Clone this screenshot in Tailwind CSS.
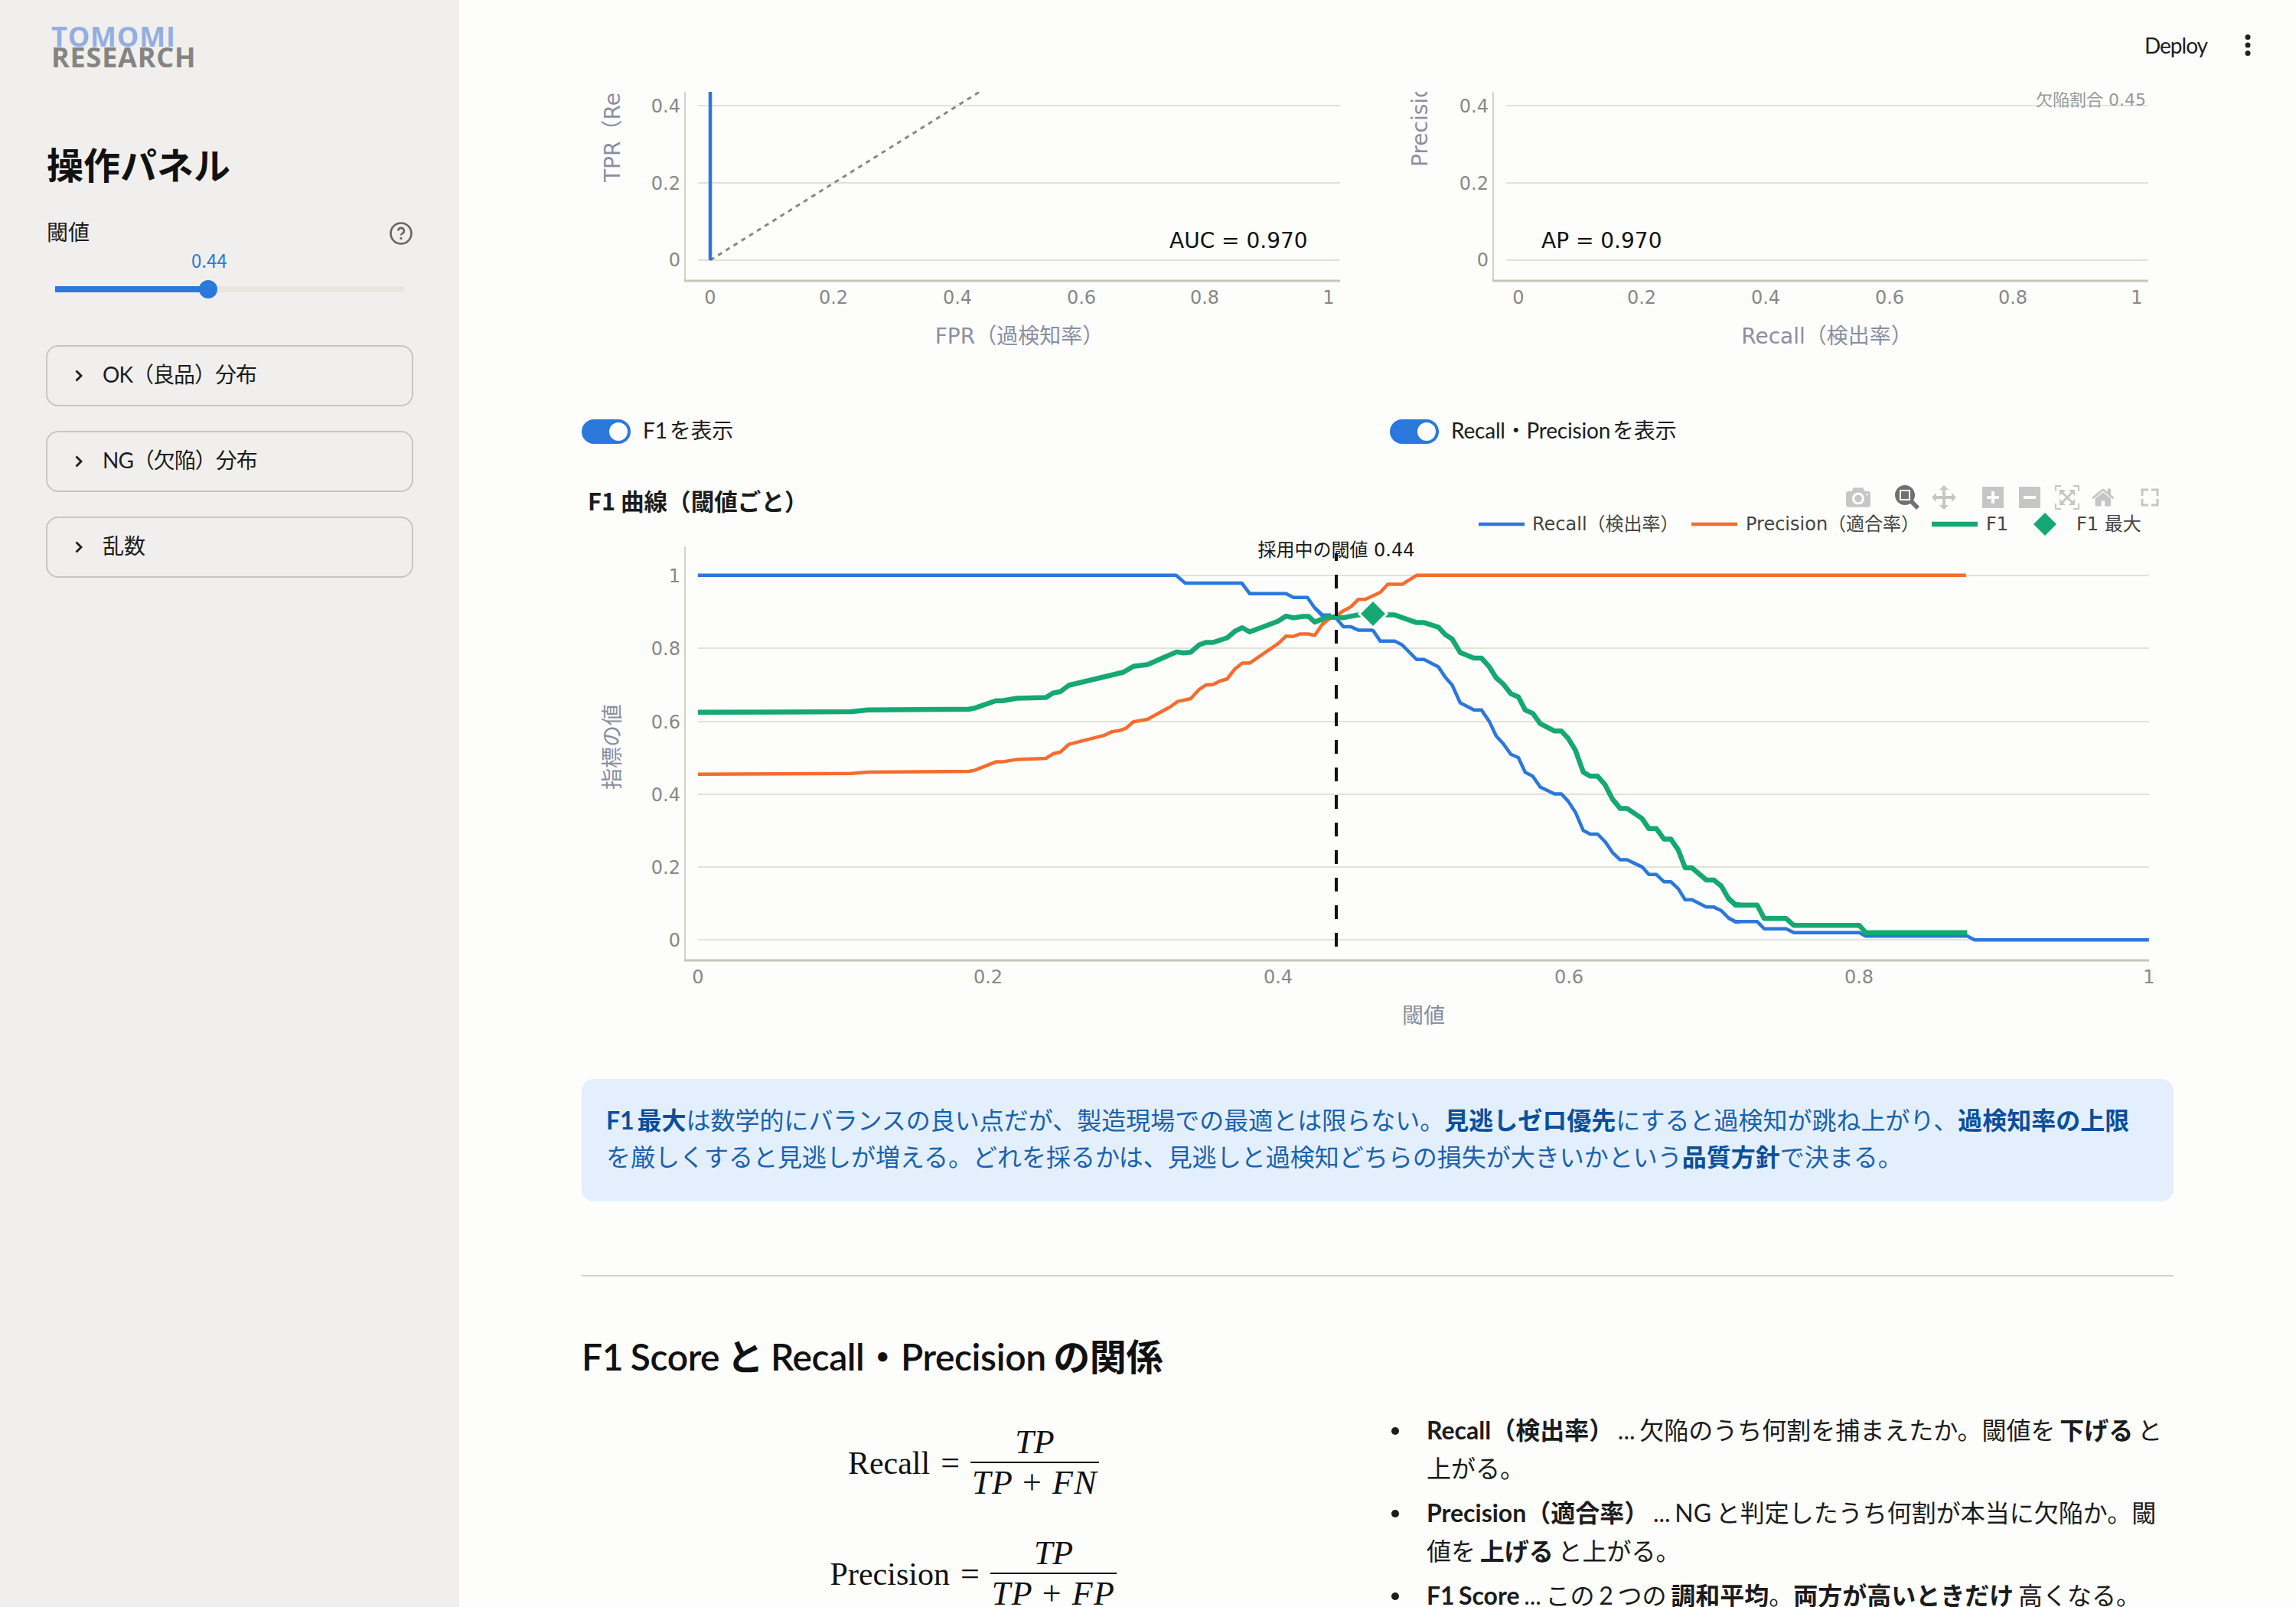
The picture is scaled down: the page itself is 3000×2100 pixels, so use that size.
<!DOCTYPE html>
<html lang="ja">
<head>
<meta charset="utf-8">
<script src="https://cdn.jsdelivr.net/npm/@tailwindcss/browser@4"></script>
</head>
<body class="m-0 bg-[#fdfdfc]">
<div class="flex w-[3000px] h-[2100px] overflow-hidden bg-[#fdfdfc] text-[#1c1c1c] [font-family:'Lato','Noto_Sans_CJK_JP',sans-serif]">

  <aside class="w-[600px] shrink-0 h-full bg-[#f0efed] pt-[35px] pl-[60px] pr-[60px]">
    <div class="pl-[7px] [font-family:'Open_Sans',sans-serif] font-bold text-[36px] leading-[26.5px] tracking-[0.8px]">
      <div class="text-[#94aee0]">TOMOMI</div>
      <div class="text-[#848484]">RESEARCH</div>
    </div>
    <h2 class="mt-[96px] text-[48px] leading-[64px] font-bold text-[#111] pl-px">操作パネル</h2>
    <div class="mt-[35px] flex items-center justify-between h-[40px] pl-px">
      <span class="text-[28px] leading-[40px]">閾値</span>
      <svg width="32" height="32" viewBox="0 0 32 32" fill="none" class="mr-0 mt-[3px]"><circle cx="16" cy="16" r="13.5" stroke="#666" stroke-width="2.6"/><path d="M12.3 12.6a3.8 3.8 0 1 1 5.6 3.4c-1.2.7-1.9 1.3-1.9 2.6" stroke="#666" stroke-width="2.6"/><circle cx="16" cy="22.4" r="1.6" fill="#666"/></svg>
    </div>
    <div class="relative h-[60px] mt-[-1px] mx-[12px]">
      <span class="absolute left-[178px] top-0 w-[46px] text-center text-[24px] leading-[36px] text-[#2d78d8] [font-family:'Noto_Sans_CJK_JP',sans-serif]">0.44</span>
      <div class="absolute left-0 right-0 top-[52px] h-[8px] bg-[#e8e7df]"></div>
      <div class="absolute left-0 w-[200px] top-[52px] h-[8px] bg-[#2b78dc]"></div>
      <div class="absolute left-[188px] top-[44px] w-[24px] h-[24px] rounded-full bg-[#2b78dc]"></div>
    </div>
    <div class="mt-[69px] flex flex-col gap-[32px]">
      <div class="h-[80px] rounded-[16px] border-2 border-[#c6c6c3] flex items-center pl-[36px] gap-[26px] text-[28px] tracking-[-1px]">
        <svg width="10" height="16" viewBox="0 0 10 16" fill="none"><path d="M1.5 1.5 8 8l-6.500 6.500" stroke="#1c1c1c" stroke-width="2.800"/></svg><span class="pb-[4px]">OK（良品）分布</span>
      </div>
      <div class="h-[80px] rounded-[16px] border-2 border-[#c6c6c3] flex items-center pl-[36px] gap-[26px] text-[28px] tracking-[-1px]">
        <svg width="10" height="16" viewBox="0 0 10 16" fill="none"><path d="M1.5 1.5 8 8l-6.500 6.500" stroke="#1c1c1c" stroke-width="2.800"/></svg><span class="pb-[4px]">NG（欠陥）分布</span>
      </div>
      <div class="h-[80px] rounded-[16px] border-2 border-[#c6c6c3] flex items-center pl-[36px] gap-[26px] text-[28px]">
        <svg width="10" height="16" viewBox="0 0 10 16" fill="none"><path d="M1.5 1.5 8 8l-6.500 6.500" stroke="#1c1c1c" stroke-width="2.800"/></svg><span class="pb-[4px]">乱数</span>
      </div>
    </div>
  </aside>

  <main class="flex-1 min-w-0 h-full flex flex-col">
    <header class="h-[120px] shrink-0 flex items-center justify-end pr-[60px] gap-[46px] pb-[3px]">
      <span class="text-[28px] leading-[40px] tracking-[-1px]">Deploy</span>
      <svg width="10" height="30" viewBox="0 0 10 30" class="relative left-[2px]"><circle cx="5" cy="4.500" r="3.500" fill="#222"/><circle cx="5" cy="15" r="3.500" fill="#222"/><circle cx="5" cy="25.500" r="3.500" fill="#222"/></svg>
    </header>

    <div class="px-[160px] flex-1 min-h-0 overflow-hidden">
      <div class="grid grid-cols-2 gap-[32px]">
        <svg width="1024" height="380" viewBox="760 120 1024 380" class="block [font-family:'DejaVu_Sans','Noto_Sans_CJK_JP',sans-serif]">
          <g stroke="#e2e2d9" stroke-width="2"><line x1="912" x2="1751" y1="138" y2="138"/><line x1="912" x2="1751" y1="239" y2="239"/><line x1="912" x2="1751" y1="340" y2="340"/></g>
          <line x1="895" x2="895" y1="120" y2="367" stroke="#d3d3c8" stroke-width="2"/>
          <line x1="894" x2="1751" y1="367" y2="367" stroke="#c6c6b6" stroke-width="3"/>
          <line x1="928" x2="1280" y1="340" y2="120" stroke="#888" stroke-width="3" stroke-dasharray="6 6"/>
          <line x1="928" x2="928" y1="120" y2="340" stroke="#2b78dc" stroke-width="4.500"/>
          <g font-size="24" fill="#888" text-anchor="end" dominant-baseline="central"><text x="889" y="139">0.4</text><text x="889" y="240">0.2</text><text x="889" y="340">0</text></g>
          <g font-size="24" fill="#888" text-anchor="middle" dominant-baseline="central"><text x="928" y="389">0</text><text x="1089" y="389">0.2</text><text x="1251" y="389">0.4</text><text x="1413" y="389">0.6</text><text x="1574" y="389">0.8</text><text x="1736" y="389">1</text></g>
          <text x="1528" y="314" font-size="28" fill="#111" dominant-baseline="central">AUC = 0.970</text>
          <text x="1332" y="439" font-size="28" fill="#8b8fa0" text-anchor="middle" dominant-baseline="central">FPR（過検知率）</text>
          <text x="800" y="238" font-size="28" fill="#8b8fa0" dominant-baseline="central" transform="rotate(-90 800 238)">TPR（Recall）</text>
        </svg>
        <svg width="1024" height="380" viewBox="1816 120 1024 380" class="block [font-family:'DejaVu_Sans','Noto_Sans_CJK_JP',sans-serif]">
          <g stroke="#e2e2d9" stroke-width="2"><line x1="1968" x2="2807" y1="138" y2="138"/><line x1="1968" x2="2807" y1="239" y2="239"/><line x1="1968" x2="2807" y1="340" y2="340"/></g>
          <line x1="1951" x2="1951" y1="120" y2="367" stroke="#d3d3c8" stroke-width="2"/>
          <line x1="1950" x2="2807" y1="367" y2="367" stroke="#c6c6b6" stroke-width="3"/>
          <g font-size="24" fill="#888" text-anchor="end" dominant-baseline="central"><text x="1945" y="139">0.4</text><text x="1945" y="240">0.2</text><text x="1945" y="340">0</text></g>
          <g font-size="24" fill="#888" text-anchor="middle" dominant-baseline="central"><text x="1984" y="389">0</text><text x="2145" y="389">0.2</text><text x="2307" y="389">0.4</text><text x="2469" y="389">0.6</text><text x="2630" y="389">0.8</text><text x="2792" y="389">1</text></g>
          <text x="2804" y="130" font-size="22" fill="#999" text-anchor="end" dominant-baseline="central">欠陥割合 0.45</text>
          <text x="2014" y="314" font-size="28" fill="#111" dominant-baseline="central">AP = 0.970</text>
          <text x="2387" y="439" font-size="28" fill="#8b8fa0" text-anchor="middle" dominant-baseline="central">Recall（検出率）</text>
          <text x="1855" y="218" font-size="28" fill="#8b8fa0" dominant-baseline="central" transform="rotate(-90 1855 218)">Precision（適合率）</text>
        </svg>
      </div>

      <div class="grid grid-cols-2 gap-[32px] mt-[46px] h-[32px] text-[28px] leading-[32px] tracking-[-0.2px] [word-spacing:-4px]">
        <label class="flex items-center gap-[16px]">
          <span class="relative block w-[64px] h-[32px] rounded-full bg-[#2b78dc]"><span class="absolute right-[4px] top-[4px] w-[24px] h-[24px] rounded-full bg-white"></span></span>
          <span class="pb-[3px]">F1 を表示</span>
        </label>
        <label class="flex items-center gap-[16px]">
          <span class="relative block w-[64px] h-[32px] rounded-full bg-[#2b78dc]"><span class="absolute right-[4px] top-[4px] w-[24px] h-[24px] rounded-full bg-white"></span></span>
          <span class="pb-[3px]">Recall・Precision を表示</span>
        </label>
      </div>

      <svg width="2080" height="730" viewBox="760 620 2080 730" class="block mt-[42px] [font-family:'DejaVu_Sans','Noto_Sans_CJK_JP',sans-serif]">
        <text x="768" y="654" font-size="30.600" font-weight="700" fill="#1c1c1c" dominant-baseline="central" class="[font-family:'Noto_Sans_CJK_JP',sans-serif]">F1 曲線（閾値ごと）</text>

        <g fill="#c6c6c6">
          <path transform="translate(2412 661.200) scale(.032 -.032)" d="m500 450c-83 0-150-67-150-150 0-83 67-150 150-150 83 0 150 67 150 150 0 83-67 150-150 150z m400 150h-120c-16 0-34 13-39 29l-31 93c-6 15-23 28-40 28h-340c-16 0-34-13-39-28l-31-94c-6-15-23-28-40-28h-120c-55 0-100-45-100-100v-450c0-55 45-100 100-100h800c55 0 100 45 100 100v450c0 55-45 100-100 100z m-400-550c-138 0-250 112-250 250 0 138 112 250 250 250 138 0 250-112 250-250 0-138-112-250-250-250z m365 380c-19 0-35 16-35 35 0 19 16 35 35 35 19 0 35-16 35-35 0-19-16-35-35-35z"/>
          <path fill="#707070" transform="translate(2476 661.200) scale(.032 -.032)" d="m1000-25l-250 251c40 63 63 138 63 218 0 224-182 406-407 406-224 0-406-182-406-406s183-406 407-406c80 0 155 22 218 62l250-250 125 125z m-812 250l0 438 437 0 0-438-437 0z m62 375l313 0 0-312-313 0 0 312z"/>
          <path transform="translate(2524 661.200) scale(.032 -.032)" d="m1000 350l-187 188 0-125-250 0 0 250 125 0-188 187-187-187 125 0 0-250-250 0 0 125-188-188 186-187 0 125 252 0 0-250-125 0 187-188 188 188-125 0 0 250 250 0 0-126 187 188z"/>
          <path transform="translate(2590 661.200) scale(.032 -.032)" d="m1 787l0-875 875 0 0 875-875 0z m687-500l-187 0 0-187-125 0 0 187-188 0 0 125 188 0 0 187 125 0 0-187 187 0 0-125z"/>
          <path transform="translate(2638 661.200) scale(.032 -.032)" d="m0 788l0-876 875 0 0 876-875 0z m688-500l-500 0 0 125 500 0 0-125z"/>
          <path transform="translate(2685 661.200) scale(.032 -.032)" d="m250 850l-187 0-63 0 0-62 0-188 63 0 0 188 187 0 0 62z m688 0l-188 0 0-62 188 0 0-188 62 0 0 188 0 62-62 0z m-875-938l0 188-63 0 0-188 0-62 63 0 187 0 0 62-187 0z m875 188l0-188-188 0 0-62 188 0 62 0 0 62 0 188-62 0z m-125 188l-1 0-93-94-156 156 156 156 92-93 2 0 0 250-250 0 0-2 93-92-156-156-156 156 94 92 0 2-250 0 0-250 0 0 93 93 157-156-157-156-93 94 0 0 0-250 250 0 0 0-94 93 156 157 156-157-93-93 0 0 250 0 0 250z"/>
          <path transform="translate(2733 661.200) scale(.032 -.032)" d="m786 296v-267q0-15-11-26t-25-10h-214v214h-143v-214h-214q-15 0-25 10t-11 26v267q0 1 0 2t0 2l321 264 321-264q1-1 1-4z m124 39l-34-41q-5-5-12-6h-2q-7 0-12 3l-386 322-386-322q-7-4-13-4-7 2-12 7l-35 41q-4 5-3 13t6 12l401 334q18 15 42 15t43-15l136-114v109q0 8 5 13t13 5h107q8 0 13-5t5-13v-227l122-102q5-5 6-12t-4-13z"/>
        </g>
        <path d="M2799 648v-8h8M2811 640h8v8M2819 652v8h-8M2807 660h-8v-8" fill="none" stroke="#c6c6c6" stroke-width="3"/>

        <g stroke="#e2e2d9" stroke-width="2">
          <line x1="912" x2="2808" y1="752" y2="752"/><line x1="912" x2="2808" y1="847" y2="847"/><line x1="912" x2="2808" y1="943" y2="943"/><line x1="912" x2="2808" y1="1038" y2="1038"/><line x1="912" x2="2808" y1="1133" y2="1133"/><line x1="912" x2="2808" y1="1228" y2="1228"/>
        </g>
        <line x1="895" x2="895" y1="714" y2="1255" stroke="#d3d3c8" stroke-width="2"/>
        <line x1="894" x2="2808" y1="1255" y2="1255" stroke="#c6c6b6" stroke-width="3"/>

        <g font-size="24" fill="#888" text-anchor="end" dominant-baseline="central"><text x="889" y="753">1</text><text x="889" y="848">0.8</text><text x="889" y="944">0.6</text><text x="889" y="1039">0.4</text><text x="889" y="1134">0.2</text><text x="889" y="1229">0</text></g>
        <g font-size="24" fill="#888" text-anchor="middle" dominant-baseline="central"><text x="912" y="1277">0</text><text x="1291" y="1277">0.2</text><text x="1670" y="1277">0.4</text><text x="2050" y="1277">0.6</text><text x="2429" y="1277">0.8</text><text x="2808" y="1277">1</text></g>
        <text x="1860" y="1327" font-size="28" fill="#8b8fa0" text-anchor="middle" dominant-baseline="central">閾値</text>
        <text x="800" y="976" font-size="28" fill="#8b8fa0" text-anchor="middle" dominant-baseline="central" transform="rotate(-90 800 976)">指標の値</text>

        <g fill="none" stroke-linejoin="round">
          <!-- Recall -->
          <g stroke="#2b78dc" stroke-width="4.500">
            <polyline vector-effect="non-scaling-stroke" transform="translate(760 620) scale(.73342 .45918)" points="207,287 1059,287 1075,309 1176,309 1190,339 1255,339 1268,350 1293,350 1305,378 1320,400 1335,400"/>
            <polyline vector-effect="non-scaling-stroke" transform="translate(1600 700) scale(.44643 .35714)" points="265,265 285,292 305,292 325,300 348,333 370,333 392,346 434,346 456,386 498,386 520,400 562,453 584,453 626,480 646,518 666,546 690,612 730,638 752,638 775,680 795,733 815,760 838,800 860,812 880,866 902,880 924,920 966,945 986,945 1006,972 1027,1012 1050,1079 1070,1092 1092,1092 1114,1120 1136,1160 1158,1186 1178,1186 1222,1212 1242,1240 1264,1240 1286,1266 1306,1266 1328,1292 1348,1332 1368,1332 1410,1359 1432,1359 1454,1372 1476,1400 1496,1413 1510,1413"/>
            <polyline vector-effect="non-scaling-stroke" transform="translate(2200 1000) scale(.42092 .33333)" points="138,598 160,613 228,613 250,641 318,641 342,656 545,656 565,670 880,670 903,685 1444,685"/>
          </g>
          <!-- Precision -->
          <g stroke="#f46d2e" stroke-width="4.500">
            <polyline vector-effect="non-scaling-stroke" transform="translate(760 620) scale(.73342 .45918)" points="207,853 480,851 510,847 690,845 700,842 738,818 750,818 775,811 827,808 840,795 853,790 868,768 930,743 945,732 958,729 970,722 983,704 1008,697 1048,662 1062,646 1085,638 1100,612 1112,599 1125,598 1137,588 1150,582 1163,555 1177,537 1190,537 1242,480 1255,460 1268,461 1280,454 1295,454 1306,458 1320,425 1335,402"/>
            <polyline vector-effect="non-scaling-stroke" transform="translate(1600 700) scale(.44643 .35714)" points="285,327 305,305 325,295 348,275 370,260 392,233 412,233 456,207 478,178 520,178 562,145 2170,145"/>
          </g>
          <!-- F1 -->
          <g stroke="#16a874" stroke-width="6.500">
            <polyline vector-effect="non-scaling-stroke" transform="translate(760 620) scale(.73342 .45918)" points="207,677 480,675 510,670 690,668 700,665 738,644 750,644 775,637 827,635 840,622 853,618 868,600 965,563 983,546 1008,541 1060,505 1072,508 1085,506 1100,485 1112,478 1125,478 1150,465 1165,445 1177,436 1190,448 1240,418 1255,403 1268,408 1285,404 1295,404 1306,420 1330,405 1345,406"/>
            <polyline vector-effect="non-scaling-stroke" transform="translate(1600 700) scale(.44643 .35714)" points="305,297 348,300 392,290 434,285 478,290 498,290 562,318 584,318 626,335 646,362 666,378 690,428 730,448 752,448 775,480 795,520 815,542 838,578 860,590 880,638 902,650 924,688 966,715 986,715 1006,742 1027,785 1050,865 1070,880 1092,880 1114,912 1136,965 1158,998 1178,998 1222,1035 1242,1072 1264,1072 1286,1110 1306,1110 1328,1150 1348,1215 1368,1215 1410,1260 1432,1260 1454,1282 1476,1330 1496,1350 1510,1350"/>
            <polyline vector-effect="non-scaling-stroke" transform="translate(2200 1000) scale(.42092 .33333)" points="138,520 160,548 228,548 250,601 318,601 342,628 545,628 565,656 880,656"/>
          </g>
        </g>
        <polygon points="1794,784 1812,802 1794,820 1776,802" fill="#16a874" stroke="#fdfdfc" stroke-width="3"/>
        <line x1="1746" x2="1746" y1="1237" y2="723" stroke="#111" stroke-width="4" stroke-dasharray="18 18"/>
        <text x="1746" y="719" font-size="24" fill="#1a1a1a" text-anchor="middle" dominant-baseline="central">採用中の閾値 0.44</text>

        <line x1="1932" x2="1992" y1="685" y2="685" stroke="#2b78dc" stroke-width="4.500"/>
        <line x1="2210" x2="2270" y1="685" y2="685" stroke="#f46d2e" stroke-width="4.500"/>
        <line x1="2524" x2="2584" y1="685" y2="685" stroke="#16a874" stroke-width="6.500"/>
        <polygon points="2672,670 2687,685 2672,700 2657,685" fill="#16a874"/>
        <g font-size="24" fill="#444" dominant-baseline="central">
          <text x="2002" y="685">Recall（検出率）</text><text x="2281" y="685">Precision（適合率）</text><text x="2595" y="685">F1</text><text x="2713" y="685">F1 最大</text>
        </g>
      </svg>

      <div class="mt-[60px] h-[160px] rounded-[16px] bg-[#e3effc] px-[32px] pt-[30px] text-[32px] leading-[48px] text-[#1a62ad] [word-spacing:-4px]">
        <b class="font-bold text-[#0a4f9c]">F1 最大</b>は数学的にバランスの良い点だが、製造現場での最適とは限らない。<b class="font-bold text-[#0a4f9c]">見逃しゼロ優先</b>にすると過検知が跳ね上がり、<b class="font-bold text-[#0a4f9c]">過検知率の上限</b>を厳しくすると見逃しが増える。どれを採るかは、見逃しと過検知どちらの損失が大きいかという<b class="font-bold text-[#0a4f9c]">品質方針</b>で決まる。
      </div>

      <hr class="mt-[96px] border-0 border-t-2 border-[#cfcfcf]">

      <h3 class="mt-[69px] text-[48px] leading-[72px] font-semibold text-[#111] tracking-[-0.4px] [word-spacing:-2px]">F1 Score と Recall・Precision の関係</h3>

      <div class="grid grid-cols-2 gap-[32px] mt-[35px]">
        <div class="flex flex-col items-center gap-[42px] pt-[16px] [font-family:'Liberation_Serif',serif] text-[44px] leading-[50px] text-[#111]">
          <div class="flex items-center gap-[14px]">
            <span class="text-[42px]">Recall</span><span>=</span>
            <span class="inline-flex flex-col items-center italic"><span class="px-[4px]">TP</span><span class="border-t-2 border-[#111] px-[2px] tracking-[1.5px] pt-[1px]">TP <span class="not-italic">+</span> FN</span></span>
          </div>
          <div class="flex items-center gap-[14px]">
            <span class="text-[42px]">Precision</span><span>=</span>
            <span class="inline-flex flex-col items-center italic"><span class="px-[4px]">TP</span><span class="border-t-2 border-[#111] px-[2px] tracking-[1.5px] pt-[1px]">TP <span class="not-italic">+</span> FP</span></span>
          </div>
        </div>
        <ul class="m-0 mt-0 pl-[48px] list-none text-[32px] leading-[50px] text-[#1c1c1c] flex flex-col gap-[8px] [word-spacing:-2.5px]">
          <li class="relative before:absolute before:content-[''] before:left-[-46px] before:top-[21px] before:w-[10px] before:h-[10px] before:rounded-full before:bg-[#1c1c1c]"><b class="font-bold">Recall（検出率）</b> ... 欠陥のうち何割を捕まえたか。閾値を <b class="font-bold">下げる</b> と上がる。</li>
          <li class="relative before:absolute before:content-[''] before:left-[-46px] before:top-[21px] before:w-[10px] before:h-[10px] before:rounded-full before:bg-[#1c1c1c]"><b class="font-bold">Precision（適合率）</b> ... NG と判定したうち何割が本当に欠陥か。閾値を <b class="font-bold">上げる</b> と上がる。</li>
          <li class="relative before:absolute before:content-[''] before:left-[-46px] before:top-[21px] before:w-[10px] before:h-[10px] before:rounded-full before:bg-[#1c1c1c]"><b class="font-bold">F1 Score</b> ... この 2 つの <b class="font-bold">調和平均</b>。<b class="font-bold">両方が高いときだけ</b> 高くなる。</li>
        </ul>
      </div>
    </div>
  </main>
</div>
</body>
</html>
